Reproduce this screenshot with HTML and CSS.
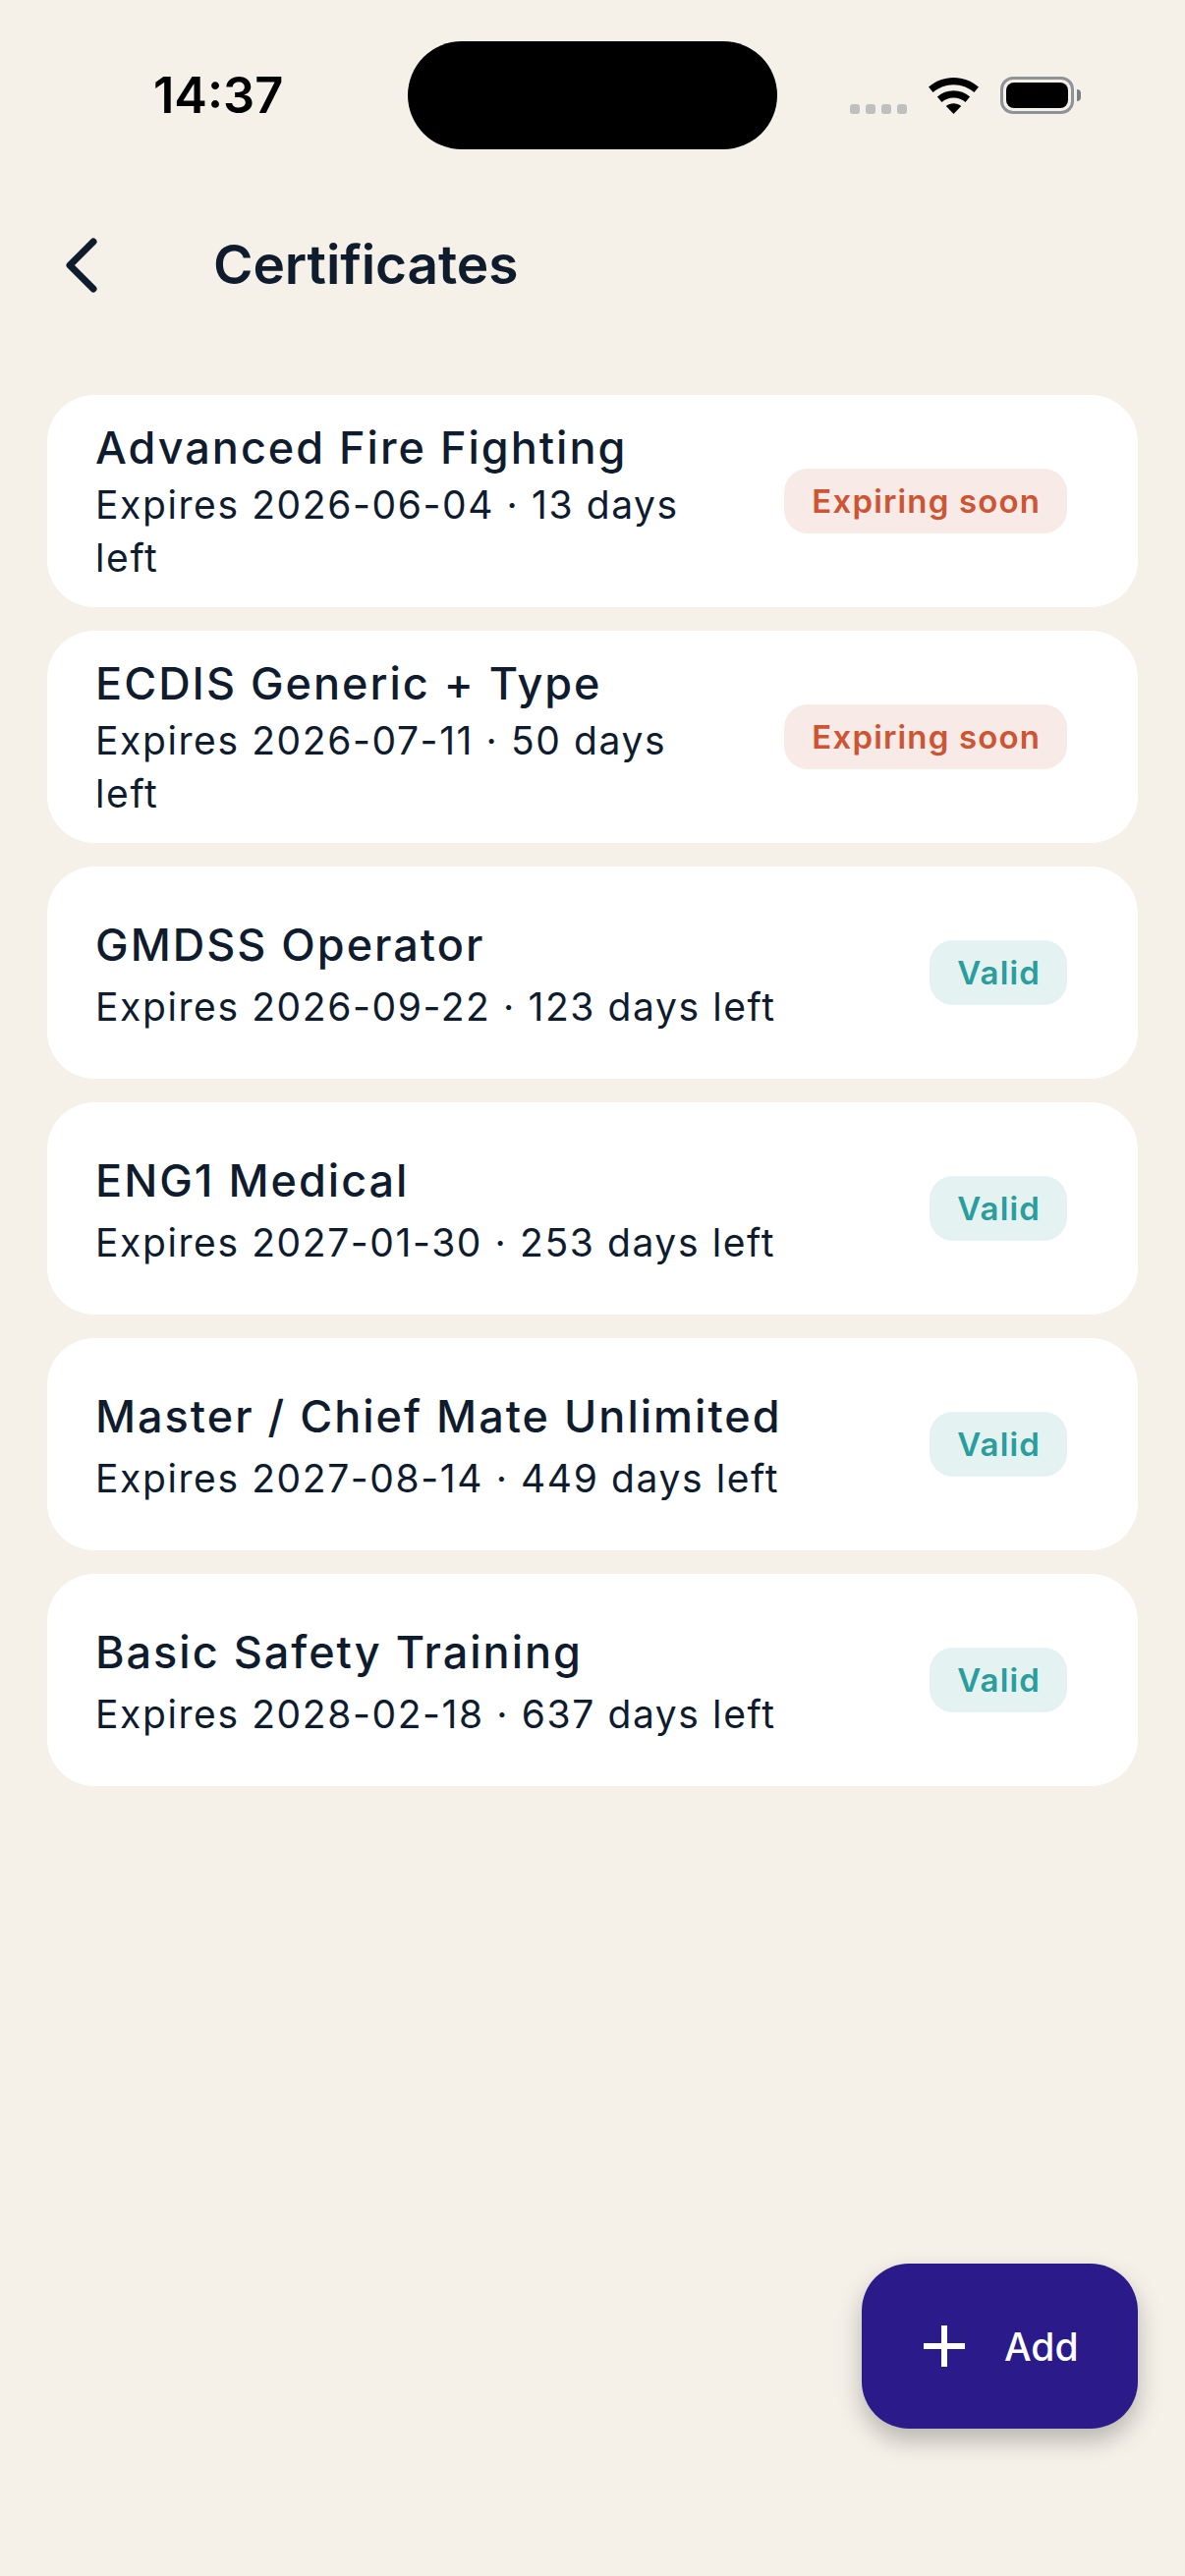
FILE: index.html
```html
<!DOCTYPE html>
<html>

	<head>
		<meta charset='utf-8' />
		<title>Certificates</title>
		<link rel="stylesheet" href="styles.css">
	</head>

	<body>
		<div class='statusBar'>
			<div class='time'>14:37</div>
			<div class='island'></div>
			<div class='statusIcons'>
				<div class='dots'><i></i><i></i><i></i><i></i></div>
				<svg class='wifi' width="51" height="37" viewBox="0 0 51 37">
					<path d="M25.5 0C15.8 0 7.2 3.4 0 9.6L4.6 15C10.4 10 17.5 7.2 25.5 7.2S40.6 10 46.4 15L51 9.6C43.8 3.4 35.2 0 25.5 0Z" />
					<path d="M25.5 13.2C19.3 13.2 13.7 15.4 8.9 19.5L13.5 24.9C16.8 22.1 20.9 20.4 25.5 20.4S34.2 22.1 37.5 24.9L42.1 19.5C37.3 15.4 31.7 13.2 25.5 13.2Z" />
					<path d="M25.5 26.2C22.7 26.2 20 27.2 17.8 29L25.5 37L33.2 29C31 27.2 28.3 26.2 25.5 26.2Z" />
				</svg>
				<div class='battery'><div class='batteryFill'></div></div>
				<div class='batteryCap'></div>
			</div>
		</div>

		<div class='header'>
			<svg class='back' width="40" height="64" viewBox="0 0 40 64">
				<path d="M30 10L6 34L30 58" />
			</svg>
			<h1 class='title'>Certificates</h1>
		</div>

		<div class='list'>
			<div class='card cardWrapped'>
				<div class='info'>
					<div class='name'>Advanced Fire Fighting</div>
					<div class='expires'>Expires 2026-06-04 · 13 days left</div>
				</div>
				<span class='badge soon'>Expiring soon</span>
			</div>
			<div class='card cardWrapped'>
				<div class='info'>
					<div class='name'>ECDIS Generic + Type</div>
					<div class='expires'>Expires 2026-07-11 · 50 days left</div>
				</div>
				<span class='badge soon'>Expiring soon</span>
			</div>
			<div class='card'>
				<div class='info'>
					<div class='name'>GMDSS Operator</div>
					<div class='expires'>Expires 2026-09-22 · 123 days left</div>
				</div>
				<span class='badge valid'>Valid</span>
			</div>
			<div class='card'>
				<div class='info'>
					<div class='name'>ENG1 Medical</div>
					<div class='expires'>Expires 2027-01-30 · 253 days left</div>
				</div>
				<span class='badge valid'>Valid</span>
			</div>
			<div class='card'>
				<div class='info'>
					<div class='name'>Master / Chief Mate Unlimited</div>
					<div class='expires'>Expires 2027-08-14 · 449 days left</div>
				</div>
				<span class='badge valid'>Valid</span>
			</div>
			<div class='card'>
				<div class='info'>
					<div class='name'>Basic Safety Training</div>
					<div class='expires'>Expires 2028-02-18 · 637 days left</div>
				</div>
				<span class='badge valid'>Valid</span>
			</div>
		</div>

		<div class='fab'>
			<svg class='plus' width="42" height="42" viewBox="0 0 42 42">
				<path d="M21 0V42M0 21H42" />
			</svg>
			<span class='fabLabel'>Add</span>
		</div>
	</body>

</html>
```

FILE: styles.css
```css
* {
	box-sizing: border-box;
}

html,
body {
	margin: 0;
	padding: 0;
}

body {
	position: relative;
	width: 1206px;
	height: 2622px;
	overflow: hidden;
	background: #f5f1e9;
	color: #0f1c2e;
	font-family: Inter, "Noto Sans", sans-serif;
}

/* status bar */
.statusBar {
	height: 200px;
	padding-top: 42px;
	display: flex;
	align-items: flex-start;
}

.time {
	width: 415px;
	height: 110px;
	padding-left: 156px;
	font-size: 50.5px;
	font-weight: 600;
	line-height: 110px;
	color: #000;
}

.island {
	width: 376px;
	height: 110px;
	border-radius: 55px;
	background: #000;
}

.statusIcons {
	margin-left: 74px;
	margin-top: 36px;
	display: flex;
	align-items: flex-end;
	height: 38px;
}

.dots {
	display: flex;
	gap: 6px;
}

.dots i {
	display: block;
	width: 10px;
	height: 10px;
	border-radius: 3px;
	background: #bfbfbf;
}

.wifi {
	margin-left: 22px;
	fill: #000;
}

.battery {
	width: 75px;
	height: 38px;
	margin-left: 22px;
	padding: 3px;
	border: 3px solid #8e9299;
	border-radius: 13px;
}

.batteryFill {
	width: 100%;
	height: 100%;
	border-radius: 8px;
	background: #000;
}

.batteryCap {
	width: 4px;
	height: 12px;
	margin: 0 0 13px 3px;
	border-radius: 0 6px 6px 0;
	background: #7a7f87;
}

/* header */
.header {
	height: 136px;
	padding-left: 65px;
	display: flex;
	align-items: center;
}

.back {
	fill: none;
	stroke: #0f1c2e;
	stroke-width: 7;
	stroke-linecap: round;
	stroke-linejoin: round;
}

.title {
	margin: 2px 0 0 112px;
	font-size: 55px;
	font-weight: 600;
	line-height: 72px;
	letter-spacing: -0.1px;
}

/* list */
.list {
	padding: 66px 48px 0;
	display: flex;
	flex-direction: column;
	gap: 24px;
}

.card {
	height: 216px;
	padding: 0 72px 0 49px;
	display: flex;
	align-items: center;
	gap: 60px;
	background: #fff;
	border-radius: 48px;
}

.info {
	flex: 1;
	min-width: 0;
	padding-top: 3px;
}

.cardWrapped .info {
	padding-top: 0;
}

.name {
	font-size: 45px;
	font-weight: 550;
	line-height: 60px;
	letter-spacing: 2px;
}

.expires {
	margin-top: 6px;
	font-size: 39px;
	font-weight: 400;
	line-height: 54px;
	letter-spacing: 1.6px;
}

.cardWrapped .expires {
	margin-top: 1px;
}

.badge {
	flex: none;
	height: 66px;
	padding: 0 27px 0 28px;
	border-radius: 24px;
	font-size: 33px;
	font-weight: 600;
	line-height: 66px;
	letter-spacing: 1.15px;
}

.soon {
	background: #f8eae6;
	color: #cc5533;
}

.valid {
	background: #e4f2f2;
	color: #2a9d9d;
}

/* add button */
.fab {
	position: absolute;
	left: 877px;
	top: 2304px;
	width: 281px;
	height: 168px;
	padding-left: 63px;
	display: flex;
	align-items: center;
	gap: 40px;
	background: #2b1b8a;
	border-radius: 48px;
	box-shadow: 0 12px 24px rgba(0, 0, 0, 0.25);
}

.plus {
	fill: none;
	stroke: #fff;
	stroke-width: 6;
}

.fabLabel {
	font-size: 39px;
	font-weight: 500;
	color: #fff;
}
```
